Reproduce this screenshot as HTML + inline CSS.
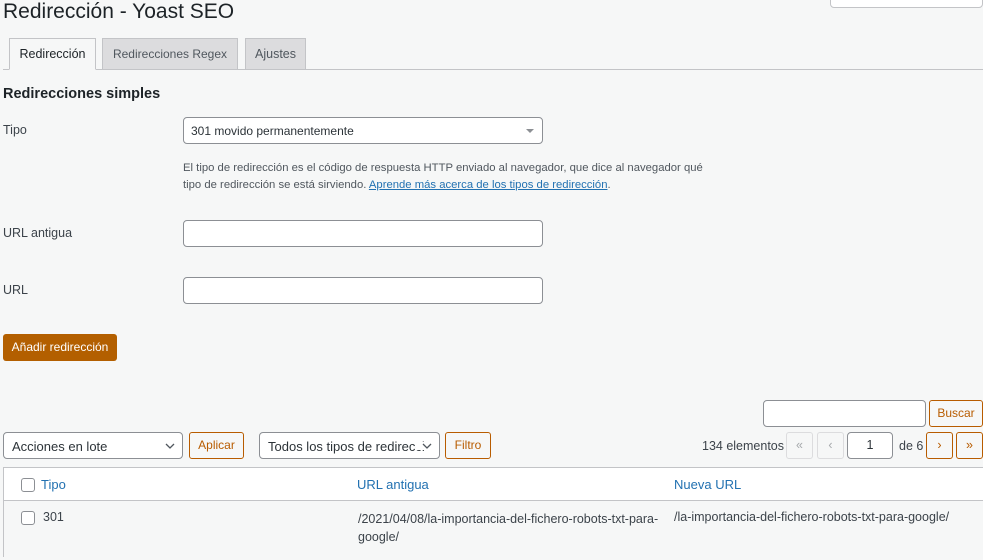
<!DOCTYPE html>
<html><head><meta charset="utf-8"><style>
*{box-sizing:border-box;margin:0;padding:0}
body{width:983px;height:549px;overflow:hidden;font-family:"Liberation Sans",sans-serif;font-size:12.5px;color:#3c434a;position:relative;background:#f6f7f7}
.a{position:absolute;white-space:nowrap}
.in{position:absolute;background:#fff;border:1px solid #8c8f94;border-radius:4px}
.btn{position:absolute;border:1px solid #b85c00;color:#b85c00;border-radius:3px;background:#f6f7f7;text-align:center;font-size:12px}
.pg{position:absolute;border:1px solid #dcdcde;color:#a7aaad;border-radius:3px;text-align:center;width:27px;height:27px;line-height:25px}
.pgo{border-color:#b85c00;color:#b85c00}
.cb{position:absolute;width:14px;height:14px;border:1px solid #8c8f94;border-radius:3px;background:#fff}
a{color:#2271b1;text-decoration:underline}
.tab{position:absolute;top:38px;height:32px;border:1px solid #c3c4c7;background:#dcdcde;font-size:12.5px;color:#50575e;text-align:center;line-height:30px}
.chev{position:absolute;right:7px;top:9px;background:#fff}
</style></head><body>
<div class="a" style="left:3px;top:0;font-size:21px;color:#1d2327">Redirección - Yoast SEO</div>
<div class="in" style="left:830px;top:-10px;width:153px;height:18px;border-color:#c3c4c7"></div>
<div class="a" style="left:3px;top:69px;width:980px;height:1px;background:#c3c4c7"></div>
<div class="tab" style="left:9px;width:87px;background:#f6f7f7;border-bottom-color:#f6f7f7;color:#1d2327">Redirección</div>
<div class="tab" style="left:102px;width:136px;font-size:12px">Redirecciones Regex</div>
<div class="tab" style="left:245px;width:61px">Ajustes</div>
<div class="a" style="left:3px;top:86px;font-size:14.5px;font-weight:bold;color:#1d2327">Redirecciones simples</div>
<div class="a" style="left:3px;top:123px">Tipo</div>
<div class="in" style="left:183px;top:117px;width:360px;height:27px;padding:6px 7px;font-size:12px;color:#2c3338">301 movido permanentemente<span style="position:absolute;right:8px;top:11px;border:4px solid transparent;border-top:4px solid #8c8f94;border-bottom:0"></span></div>
<div class="a" style="left:183px;top:160px;font-size:11.3px;color:#50575e;line-height:17px">El tipo de redirección es el código de respuesta HTTP enviado al navegador, que dice al navegador qué<br>tipo de redirección se está sirviendo. <a>Aprende más acerca de los tipos de redirección</a>.</div>
<div class="a" style="left:3px;top:226px">URL antigua</div>
<div class="in" style="left:183px;top:220px;width:360px;height:27px"></div>
<div class="a" style="left:3px;top:283px">URL</div>
<div class="in" style="left:183px;top:277px;width:360px;height:27px"></div>
<div class="a" style="left:3px;top:334px;width:114px;height:27px;background:#b35f00;color:#fff;border-radius:3px;text-align:center;line-height:27px;font-size:12px">Añadir redirección</div>
<div class="in" style="left:763px;top:400px;width:163px;height:27px"></div>
<div class="btn" style="left:929px;top:400px;width:54px;height:27px;line-height:25px">Buscar</div>
<div class="in" style="left:3px;top:432px;width:180px;height:27px;padding:6px 8px;font-size:13px;color:#2c3338">Acciones en lote<svg class="chev" width="10" height="8" viewBox="0 0 10 8"><path d="M1 2 L5 6 L9 2" fill="none" stroke="#50575e" stroke-width="1.3"/></svg></div>
<div class="btn" style="left:189px;top:432px;width:55px;height:27px;line-height:25px">Aplicar</div>
<div class="in" style="left:259px;top:432px;width:181px;height:27px;padding:6px 8px;font-size:13px;color:#2c3338;overflow:hidden">Todos los tipos de redirecci<svg class="chev" style="padding-left:3px;width:16px" width="16" height="8" viewBox="-3 0 13 8"><path d="M1 2 L5 6 L9 2" fill="none" stroke="#50575e" stroke-width="1.3"/></svg></div>
<div class="btn" style="left:445px;top:432px;width:46px;height:27px;line-height:25px">Filtro</div>
<div class="a" style="left:702px;top:439px">134 elementos</div>
<div class="pg" style="left:786px;top:432px">«</div>
<div class="pg" style="left:817px;top:432px">‹</div>
<div class="in" style="left:847px;top:432px;width:46px;height:27px;text-align:center;line-height:25px;color:#2c3338">1</div>
<div class="a" style="left:899px;top:439px">de 6</div>
<div class="pg pgo" style="left:926px;top:432px">›</div>
<div class="pg pgo" style="left:956px;top:432px">»</div>
<div class="a" style="left:3px;top:467px;width:985px;height:90px;border:1px solid #c3c4c7;background:#fff"></div>
<div class="a" style="left:4px;top:500px;width:985px;height:60px;border-top:1px solid #c3c4c7;background:#f6f7f7"></div>
<div class="cb" style="left:21px;top:478px"></div>
<div class="a" style="left:41px;top:477px;color:#2271b1;font-size:13px">Tipo</div>
<div class="a" style="left:357px;top:477px;color:#2271b1;font-size:13px">URL antigua</div>
<div class="a" style="left:674px;top:477px;color:#2271b1;font-size:13px">Nueva URL</div>
<div class="cb" style="left:21px;top:511px"></div>
<div class="a" style="left:43px;top:510px">301</div>
<div class="a" style="left:358px;top:510px;line-height:18px">/2021/04/08/la-importancia-del-fichero-robots-txt-para-<br>google/</div>
<div class="a" style="left:674px;top:510px">/la-importancia-del-fichero-robots-txt-para-google/</div>
</body></html>
